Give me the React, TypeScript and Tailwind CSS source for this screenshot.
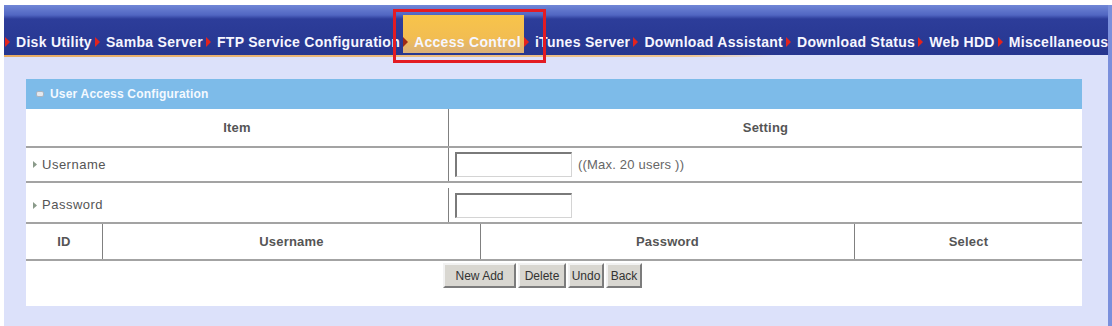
const NAV_ITEMS = [
  "Disk Utility",
  "Samba Server",
  "FTP Service Configuration",
  "Access Control",
  "iTunes Server",
  "Download Assistant",
  "Download Status",
  "Web HDD",
  "Miscellaneous",
];

function Arrow({ dark = false }: { dark?: boolean }) {
  return (
    <svg width="5" height="10" viewBox="0 0 5 10" className="shrink-0" aria-hidden="true">
      <path d="M0 0 L5 5 L0 10 Z" fill={dark ? "#9c2b16" : "#e3231d"} />
    </svg>
  );
}

function NavItem({ label }: { label: string }) {
  const active = label === "Access Control";
  return (
    <div
      className={
        active
          ? "relative flex h-[38px] items-center pt-[16px] bg-[linear-gradient(to_bottom,#f8c44a,#f2bd52_60%,#d9b07a)]"
          : "flex h-[38px] items-center pt-[16px]"
      }
    >
      <Arrow dark={active} />
      <span className="ml-[6px] mr-[3px] whitespace-nowrap">{label}</span>
      {active && (
        <div className="pointer-events-none absolute -left-[10px] -right-[22px] -top-[6px] -bottom-[10px] border-[3px] border-[#e31b23]" />
      )}
    </div>
  );
}

function Triangle() {
  return (
    <svg width="4" height="7" viewBox="0 0 4 7" className="shrink-0" aria-hidden="true">
      <path d="M0 0 L4 3.5 L0 7 Z" fill="#8a9a8a" />
    </svg>
  );
}

function TextInput() {
  return (
    <div className="h-[25px] w-[117px] border-t-2 border-l-2 border-b border-r border-t-[#7a7a7a] border-l-[#7a7a7a] border-b-[#d4d4d4] border-r-[#d4d4d4] bg-white" />
  );
}

function Btn({ label, w }: { label: string; w: string }) {
  return (
    <button
      className={`${w} h-[25px] border-2 border-t-[#f2f2f2] border-l-[#f2f2f2] border-b-[#7c7c7c] border-r-[#7c7c7c] bg-[#d9d7d1] text-[12px] text-[#333]`}
    >
      {label}
    </button>
  );
}

export default function App() {
  return (
    <div className="h-[326px] w-[1112px] overflow-hidden bg-white font-['Liberation_Sans',Arial,sans-serif]">
      <div className="ml-[4px] mt-[5px] min-h-[321px] w-[1108px] border-r-[4px] border-[#7a8fdc] bg-[#dce1fa]">
        {/* top menu */}
        <div className="flex h-[50px] items-end pb-[2px] pl-[1px] text-[14px] font-bold tracking-[0.3px] text-[#f6f6ff] bg-[linear-gradient(to_bottom,#7086d6_0px,#5166c2_10px,#2d3d9a_14px,#26368f_100%)]">
          {NAV_ITEMS.map((item) => (
            <NavItem key={item} label={item} />
          ))}
        </div>
        <div className="h-[2px] bg-[linear-gradient(to_right,#e7ab62,#efc48e_62%,transparent_70%)]" />

        <div className="pl-[22px] pt-[22px] pb-[20px]">
          <div className="w-[1056px] bg-white text-[#555]">
            <div className="flex h-[30px] items-center gap-[6px] bg-[#7dbbe9] pl-[10px] text-[12px] font-bold tracking-[0.2px] text-[#f4f9ff]">
              <span className="h-[6px] w-[8px] rounded-[2px] border border-[#a9b4c0] bg-[#e4e8ee]" />
              User Access Configuration
            </div>

            <div className="flex h-[39px] border-b-2 border-[#a3a3a3] text-[13px] font-bold tracking-[0.2px] text-[#555]">
              <div className="flex w-[423px] items-center justify-center border-r border-[#808080]">Item</div>
              <div className="flex flex-1 items-center justify-center">Setting</div>
            </div>

            <div className="flex h-[35px] border-b-2 border-[#a3a3a3] text-[13px] tracking-[0.5px]">
              <div className="flex w-[423px] items-center gap-[5px] border-r border-[#808080] pl-[7px]">
                <Triangle />
                Username
              </div>
              <div className="flex flex-1 items-center pl-[6px]">
                <TextInput />
                <span className="ml-[6px] text-[13px] tracking-[0.2px] text-[#666]">((Max. 20 users ))</span>
              </div>
            </div>

            <div className="flex h-[41px] border-b-2 border-[#a3a3a3] pt-[5px] text-[13px] tracking-[0.5px]">
              <div className="flex w-[423px] items-center gap-[5px] border-r border-[#808080] pl-[7px]">
                <Triangle />
                Password
              </div>
              <div className="flex flex-1 items-center pl-[6px]">
                <TextInput />
              </div>
            </div>

            <div className="flex h-[37px] border-b-2 border-[#a3a3a3] text-[13px] font-bold tracking-[0.2px] text-[#555]">
              <div className="flex w-[77px] items-center justify-center border-r border-[#808080]">ID</div>
              <div className="flex w-[378px] items-center justify-center border-r border-[#808080]">Username</div>
              <div className="flex w-[374px] items-center justify-center border-r border-[#808080]">Password</div>
              <div className="flex flex-1 items-center justify-center">Select</div>
            </div>

            <div className="flex h-[45px] items-start justify-center gap-[2px] pr-[23px] pt-[2px]">
              <Btn label="New Add" w="w-[73px]" />
              <Btn label="Delete" w="w-[48px]" />
              <Btn label="Undo" w="w-[36px]" />
              <Btn label="Back" w="w-[36px]" />
            </div>
          </div>
        </div>
      </div>
    </div>
  );
}
